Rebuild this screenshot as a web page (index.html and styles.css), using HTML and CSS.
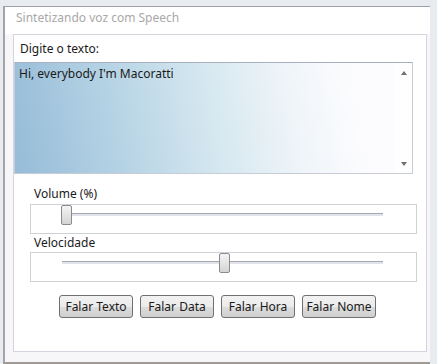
FILE: index.html
```html
<!DOCTYPE html>
<html lang="pt">
<head>
    <meta charset="UTF-8">
    <meta name="viewport" content="width=device-width, initial-scale=1.0">
    <title>Sintetizando voz com Speech</title>
    <link rel="stylesheet" href="styles.css">
</head>
<body>

    <div class="window">
        <div class="title">Sintetizando voz com Speech</div>

        <div class="panel">
            <div class="label">Digite o texto:</div>
            <div class="textbox">
                <div class="text">Hi, everybody I'm Macoratti</div>
                <div class="scrollbar">
                    <span class="arrow up"></span>
                    <span class="arrow down"></span>
                </div>
            </div>

            <div class="group">
                <div class="caption">Volume (%)</div>
                <div class="slider">
                    <div class="track"></div>
                    <div class="thumb" style="left: 30px"></div>
                </div>
            </div>

            <div class="group">
                <div class="caption">Velocidade</div>
                <div class="slider">
                    <div class="track"></div>
                    <div class="thumb" style="left: 188px"></div>
                </div>
            </div>

            <div class="buttons">
                <button>Falar Texto</button>
                <button>Falar Data</button>
                <button>Falar Hora</button>
                <button>Falar Nome</button>
            </div>
        </div>
    </div>

</body>
</html>
```

FILE: styles.css
```css
html {
    background-color: #e8ecf0;
}

body {
    margin: 0;
    padding-top: 6px;
    height: 364px;
    box-sizing: border-box;
    overflow: hidden;
    font-family: 'Noto Sans', 'Open Sans', sans-serif;
    font-size: 12px;
    color: #1a1a1a;
}

.window {
    margin: 0 7px 0 3px;
    height: 358px;
    box-sizing: border-box;
    background-color: #f7f7fa;
    border-left: 2px solid #a4a4a8;
    border-top: 1px solid #a0a0a8;
    border-bottom: 2px solid #a09a96;
    padding: 0 0 0 8px;
}

.title {
    height: 27px;
    line-height: 16px;
    padding: 3px 0 0 3px;
    box-sizing: border-box;
    color: #a8a8a8;
    background-color: #fff;
    margin-left: -8px;
    padding-left: 11px;
}

.panel {
    width: 414px;
    height: 318px;
    box-sizing: border-box;
    border: 1px solid #d6d2de;
    background-color: #fff;
}

.label {
    height: 27px;
    line-height: 16px;
    padding: 6px 0 0 6px;
    box-sizing: border-box;
}

.textbox {
    display: flex;
    width: 399px;
    height: 112px;
    box-sizing: border-box;
    border: 1px solid #c8ccd6;
    border-top-color: #a8b0c0;
    background: linear-gradient(80deg, #96bcd8 0%, #b4d2e4 25%, #d6e8f0 50%, #f0f5f9 70%, #fcfcfe 85%);
}

.text {
    flex: 1;
    padding: 3px 0 0 4px;
    line-height: 16px;
}

.scrollbar {
    width: 17px;
    display: flex;
    flex-direction: column;
    justify-content: space-between;
    align-items: center;
    padding: 8px 0 7px;
    background-color: rgba(255, 255, 255, 0.6);
}

.arrow {
    width: 0;
    height: 0;
    border-left: 3px solid transparent;
    border-right: 3px solid transparent;
}

.arrow.up {
    border-bottom: 4px solid #707070;
}

.arrow.down {
    border-top: 4px solid #707070;
}

.group {
    padding: 0 0 0 16px;
}

.caption {
    height: 30px;
    line-height: 16px;
    padding: 12px 0 0 4px;
    box-sizing: border-box;
}

.group + .group .caption {
    height: 18px;
    padding-top: 1px;
}

.slider {
    position: relative;
    width: 387px;
    height: 30px;
    box-sizing: border-box;
    border: 1px solid #cdd2d6;
}

.track {
    position: absolute;
    left: 31px;
    right: 33px;
    top: 8px;
    height: 2px;
    border-top: 1px solid #a8a8b0;
    background-color: #e0e4ea;
}

.thumb {
    position: absolute;
    top: 0;
    width: 11px;
    height: 20px;
    box-sizing: border-box;
    border: 1px solid #8a8a90;
    border-radius: 2px;
    background: linear-gradient(#f4f4f4, #d4d4d4);
}

.buttons {
    display: flex;
    gap: 7px;
    padding: 13px 0 0 45px;
}

button {
    width: 74px;
    height: 23px;
    padding: 0;
    font-family: inherit;
    font-size: 12px;
    color: #1a1a1a;
    border: 1px solid #707070;
    border-radius: 3px;
    background: linear-gradient(#f2f2f2 0%, #ebebeb 50%, #dddddd 51%, #cfcfcf 100%);
}
```
